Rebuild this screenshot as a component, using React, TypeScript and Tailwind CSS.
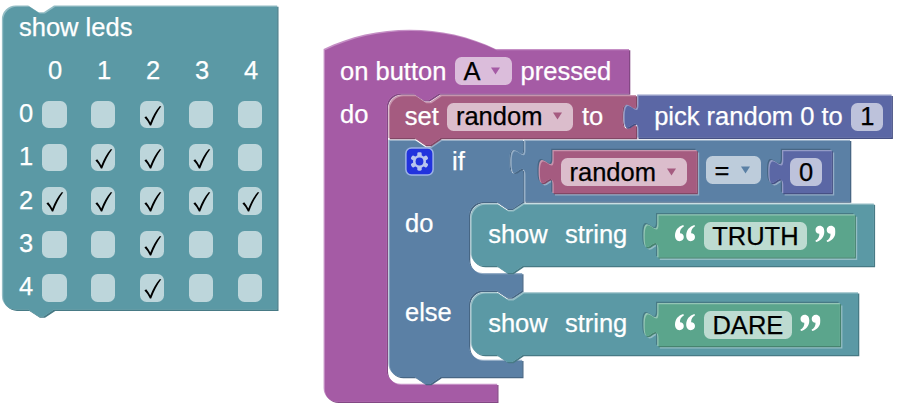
import type { ReactNode } from "react";

type Tone = { base: string; light: string; dark: string };

const TEAL: Tone = { base: "#5b99a5", light: "#94bdc5", dark: "#477a85" };
const PURPLE: Tone = { base: "#a55ba5", light: "#c58fc5", dark: "#834884" };
const ROSE: Tone = { base: "#a55b80", light: "#c794ad", dark: "#824765" };
const INDIGO: Tone = { base: "#5b67a5", light: "#939bc6", dark: "#465084" };
const BLUE: Tone = { base: "#5b80a5", light: "#94adc6", dark: "#476684" };
const GREEN: Tone = { base: "#5ba58c", light: "#94c6b5", dark: "#46836e" };

const NOTCH = "l10.3,6.9 5.2,0 10.3,-6.9";
const NOTCH_BACK = "l-10.3,6.9 -5.2,0 -10.3,-6.9";
const TAB_UP = "c0,-17.2 -13.8,13.8 -13.8,-12.9 s13.8,4.3 13.8,-12.9";
const TAB_DOWN = "c0,17.2 -13.8,-13.8 -13.8,12.9 s13.8,-4.3 13.8,12.9";

// Stack block: notch on top, matching bump below.
const stack = (x: number, y: number, r: number, b: number) =>
  `M${x},${y + 13.8} a13.8,13.8 0 0 1 13.8,-13.8 H${x + 26.3} ${NOTCH} H${r} V${b} H${x + 52.1} ${NOTCH_BACK} H${x + 13.8} a13.8,13.8 0 0 1 -13.8,-13.8 Z`;

// Value block: plug on the left edge.
const value = (x: number, y: number, r: number, b: number) =>
  `M${x},${y} H${r} V${b} H${x} V${y + 34.4} ${TAB_UP} Z`;

const HAT =
  "M323.6,49 c51.6,-25.8 120.4,-25.8 172,0 H629 V93.4 H438.9 " +
  NOTCH_BACK +
  " H400.5 a13.8,13.8 0 0 0 -13.8,13.8 V370 a13.8,13.8 0 0 0 13.8,13.8 H497.2 V401.8 H337.4 a13.8,13.8 0 0 1 -13.8,-13.8 Z";

const SET =
  "M388.4,108.8 a13.8,13.8 0 0 1 13.8,-13.8 H414.7 " + NOTCH + " H636 v8.6 " + TAB_DOWN +
  " V138 H440.5 " + NOTCH_BACK + " H388.4 Z";

const IF =
  "M388.4,139.8 H414.7 " + NOTCH + " H523.2 V148.4 " + TAB_DOWN + " V202 H522.6 " + NOTCH_BACK +
  " H482.8 a13.8,13.8 0 0 0 -13.8,13.8 V259.2 a13.8,13.8 0 0 0 13.8,13.8 H522.2 V290.6 " + NOTCH_BACK +
  " H482.8 a13.8,13.8 0 0 0 -13.8,13.8 V346 a13.8,13.8 0 0 0 13.8,13.8 H522.2 V377 H440.5 " + NOTCH_BACK +
  " H402.2 a13.8,13.8 0 0 1 -13.8,-13.8 Z";

function Shape({ id, d, tone, inset }: { id: string; d: string; tone: Tone; inset?: Tone }) {
  return (
    <g>
      <clipPath id={id}>
        <path d={d} />
      </clipPath>
      {inset && <path d={d} fill={inset.light} transform="translate(2.6 2.6)" />}
      {inset && <path d={d} fill={inset.dark} transform="translate(-1.2 -1.2)" />}
      <path d={d} fill={tone.dark} transform="translate(1.3 1.3)" />
      <path d={d} fill={tone.light} />
      <g clipPath={`url(#${id})`}>
        <path d={d} fill={tone.base} transform="translate(1.3 1.3)" />
      </g>
    </g>
  );
}

function Row({ at, children }: { at: string; children: ReactNode }) {
  return <div className={`absolute flex h-7 items-center gap-[8.6px] ${at}`}>{children}</div>;
}

function Field({ width, text, arrow }: { width: string; text: string; arrow?: string }) {
  return (
    <div
      className={`flex h-7 items-center rounded-[6.5px] bg-white/60 text-black ${width} ${
        arrow ? "justify-between pl-[8.5px] pr-[11.5px]" : "justify-center"
      }`}
    >
      <span className="-mt-px">{text}</span>
      {arrow && (
        <svg width="9" height="8" viewBox="0 0 9 8" className="-mt-px">
          <path d="M0 0.5H9L4.5 7.5Z" fill={arrow} />
        </svg>
      )}
    </div>
  );
}

function Quote({ close }: { close?: boolean }) {
  const mark =
    "M8.2 0C3.2 1.6 0 5.2 0 10.6C0 14 1.8 16.2 4.5 16.2C7 16.2 8.8 14.5 8.8 12.1C8.8 9.8 7.2 8.3 5 8.3C4.7 5.4 6.2 2.8 9 1.2Z";
  return (
    <svg width="20.5" height="17" viewBox="0 0 20.5 17" className={`-mt-1.5 ${close ? "rotate-180" : ""}`}>
      <path d={mark} fill="white" />
      <path d={mark} fill="white" transform="translate(11.2 0)" />
    </svg>
  );
}

function Gear() {
  return (
    <svg width="29" height="29" viewBox="0 0 29 29" className="-ml-px">
      <rect x="0.9" y="0.9" width="27.2" height="27.2" rx="5.5" fill="#2233dd" stroke="#9db3e6" strokeWidth="1.5" />
      <g fill="#b9c5ee">
        {[0, 60, 120].map((a) => (
          <rect key={a} x="12.3" y="5.3" width="4.4" height="18.4" rx="1.4" transform={`rotate(${a} 14.5 14.5)`} />
        ))}
        <circle cx="14.5" cy="14.5" r="6.5" />
      </g>
      <circle cx="14.5" cy="14.5" r="3.9" fill="#2233dd" />
    </svg>
  );
}

function Led({ on }: { on: boolean }) {
  return (
    <div className="h-[27.6px] w-[24.5px] rounded-[6.5px] bg-white/60">
      {on && (
        <svg width="24.5" height="27.6" viewBox="0 0 24.5 27.6">
          <path
            d="M4.4 16.6L6.2 15.3C7.8 17.1 9.2 19.2 10.3 21.6C12.6 15.4 15.8 9.6 19.6 5.2L21.3 5.2C17.2 10.7 13.9 17 11.2 24.5H9.9C8.4 21.4 6.6 18.8 4.4 16.6Z"
            fill="black"
          />
        </svg>
      )}
    </div>
  );
}

const LEDS = ["00100", "01110", "11111", "00100", "00100"];

export default function App() {
  return (
    <main className="relative h-[409px] w-[900px] overflow-hidden whitespace-pre bg-white font-['Liberation_Sans',Arial,sans-serif] text-[25.5px] leading-7 text-white [-webkit-text-stroke:0.25px]">
      <svg className="absolute inset-0" width="900" height="409" viewBox="0 0 900 409">
        <Shape id="leds" d={stack(1.9, 5.4, 277.2, 309.6)} tone={TEAL} />
        <Shape id="hat" d={HAT} tone={PURPLE} />
        <Shape id="if" d={IF} tone={BLUE} />
        <Shape id="set" d={SET} tone={ROSE} />
        <Shape id="pick" d={value(637.2, 94.6, 891.6, 137.6)} tone={INDIGO} />
        <Shape id="compare" d={value(524.2, 139.8, 850, 201.4)} tone={BLUE} />
        <Shape id="variable" d={value(552.4, 150, 696.6, 193)} tone={ROSE} inset={BLUE} />
        <Shape id="zero" d={value(782, 150, 831.6, 193)} tone={INDIGO} inset={BLUE} />
        <Shape id="show1" d={stack(470.5, 203.4, 873.8, 266)} tone={TEAL} />
        <Shape id="truth" d={value(657.2, 214.2, 854.6, 257.3)} tone={GREEN} inset={TEAL} />
        <Shape id="show2" d={stack(470.5, 292.2, 858, 355)} tone={TEAL} />
        <Shape id="dare" d={value(657.2, 303, 839.8, 346)} tone={GREEN} inset={TEAL} />
      </svg>

      <section className="absolute left-[19px] top-[13px] w-[250px]">
        <h1>show leds</h1>
        <div className="ml-[11.5px] mt-[15px] grid grid-cols-[repeat(5,49px)] text-center">
          {[0, 1, 2, 3, 4].map((n) => (
            <span key={n}>{n}</span>
          ))}
        </div>
        <div className="mt-[16.5px] flex flex-col gap-[15.8px]">
          {LEDS.map((line, r) => (
            <div key={r} className="flex h-[27.6px] items-center">
              <span className="-mt-[3px] w-[23px]">{r}</span>
              <div className="flex gap-[24.4px]">
                {line.split("").map((c, i) => (
                  <Led key={i} on={c === "1"} />
                ))}
              </div>
            </div>
          ))}
        </div>
      </section>

      <Row at="left-[340px] top-[57px]">
        <span>on button</span>
        <Field width="w-[57px]" text="A" arrow={PURPLE.base} />
        <span>pressed</span>
      </Row>
      <Row at="left-[340px] top-[99.5px]">
        <span>do</span>
      </Row>
      <Row at="left-[404.8px] top-[102.5px]">
        <span className="-mt-px">set</span>
        <Field width="w-[126px]" text="random" arrow={ROSE.base} />
        <span className="-mt-px">to</span>
      </Row>
      <Row at="left-[654.2px] top-[102.5px]">
        <span className="-mt-px">pick random 0 to</span>
        <Field width="w-8" text="1" />
      </Row>

      <Row at="left-[406px] top-[147.4px]">
        <Gear />
        <span className="ml-[9.4px] -mt-px">if</span>
      </Row>
      <Row at="left-[561px] top-[158.2px]">
        <Field width="w-[126px]" text="random" arrow={ROSE.base} />
      </Row>
      <Row at="left-[706px] top-[156px]">
        <Field width="w-[55px]" text="=" arrow={BLUE.base} />
      </Row>
      <Row at="left-[790px] top-[158.2px]">
        <Field width="w-8" text="0" />
      </Row>
      <Row at="left-[405px] top-[209px]">
        <span>do</span>
      </Row>
      <Row at="left-[405px] top-[298px]">
        <span>else</span>
      </Row>

      <Row at="left-[488.2px] top-[219.5px]">
        <span>show</span>
        <span className="ml-[8.6px]">string</span>
      </Row>
      <Row at="left-[674.8px] top-[222.4px]">
        <Quote />
        <Field width="w-[103px]" text="TRUTH" />
        <Quote close />
      </Row>
      <Row at="left-[488.2px] top-[308.5px]">
        <span>show</span>
        <span className="ml-[8.6px]">string</span>
      </Row>
      <Row at="left-[674.8px] top-[311px]">
        <Quote />
        <Field width="w-[88px]" text="DARE" />
        <Quote close />
      </Row>
    </main>
  );
}
